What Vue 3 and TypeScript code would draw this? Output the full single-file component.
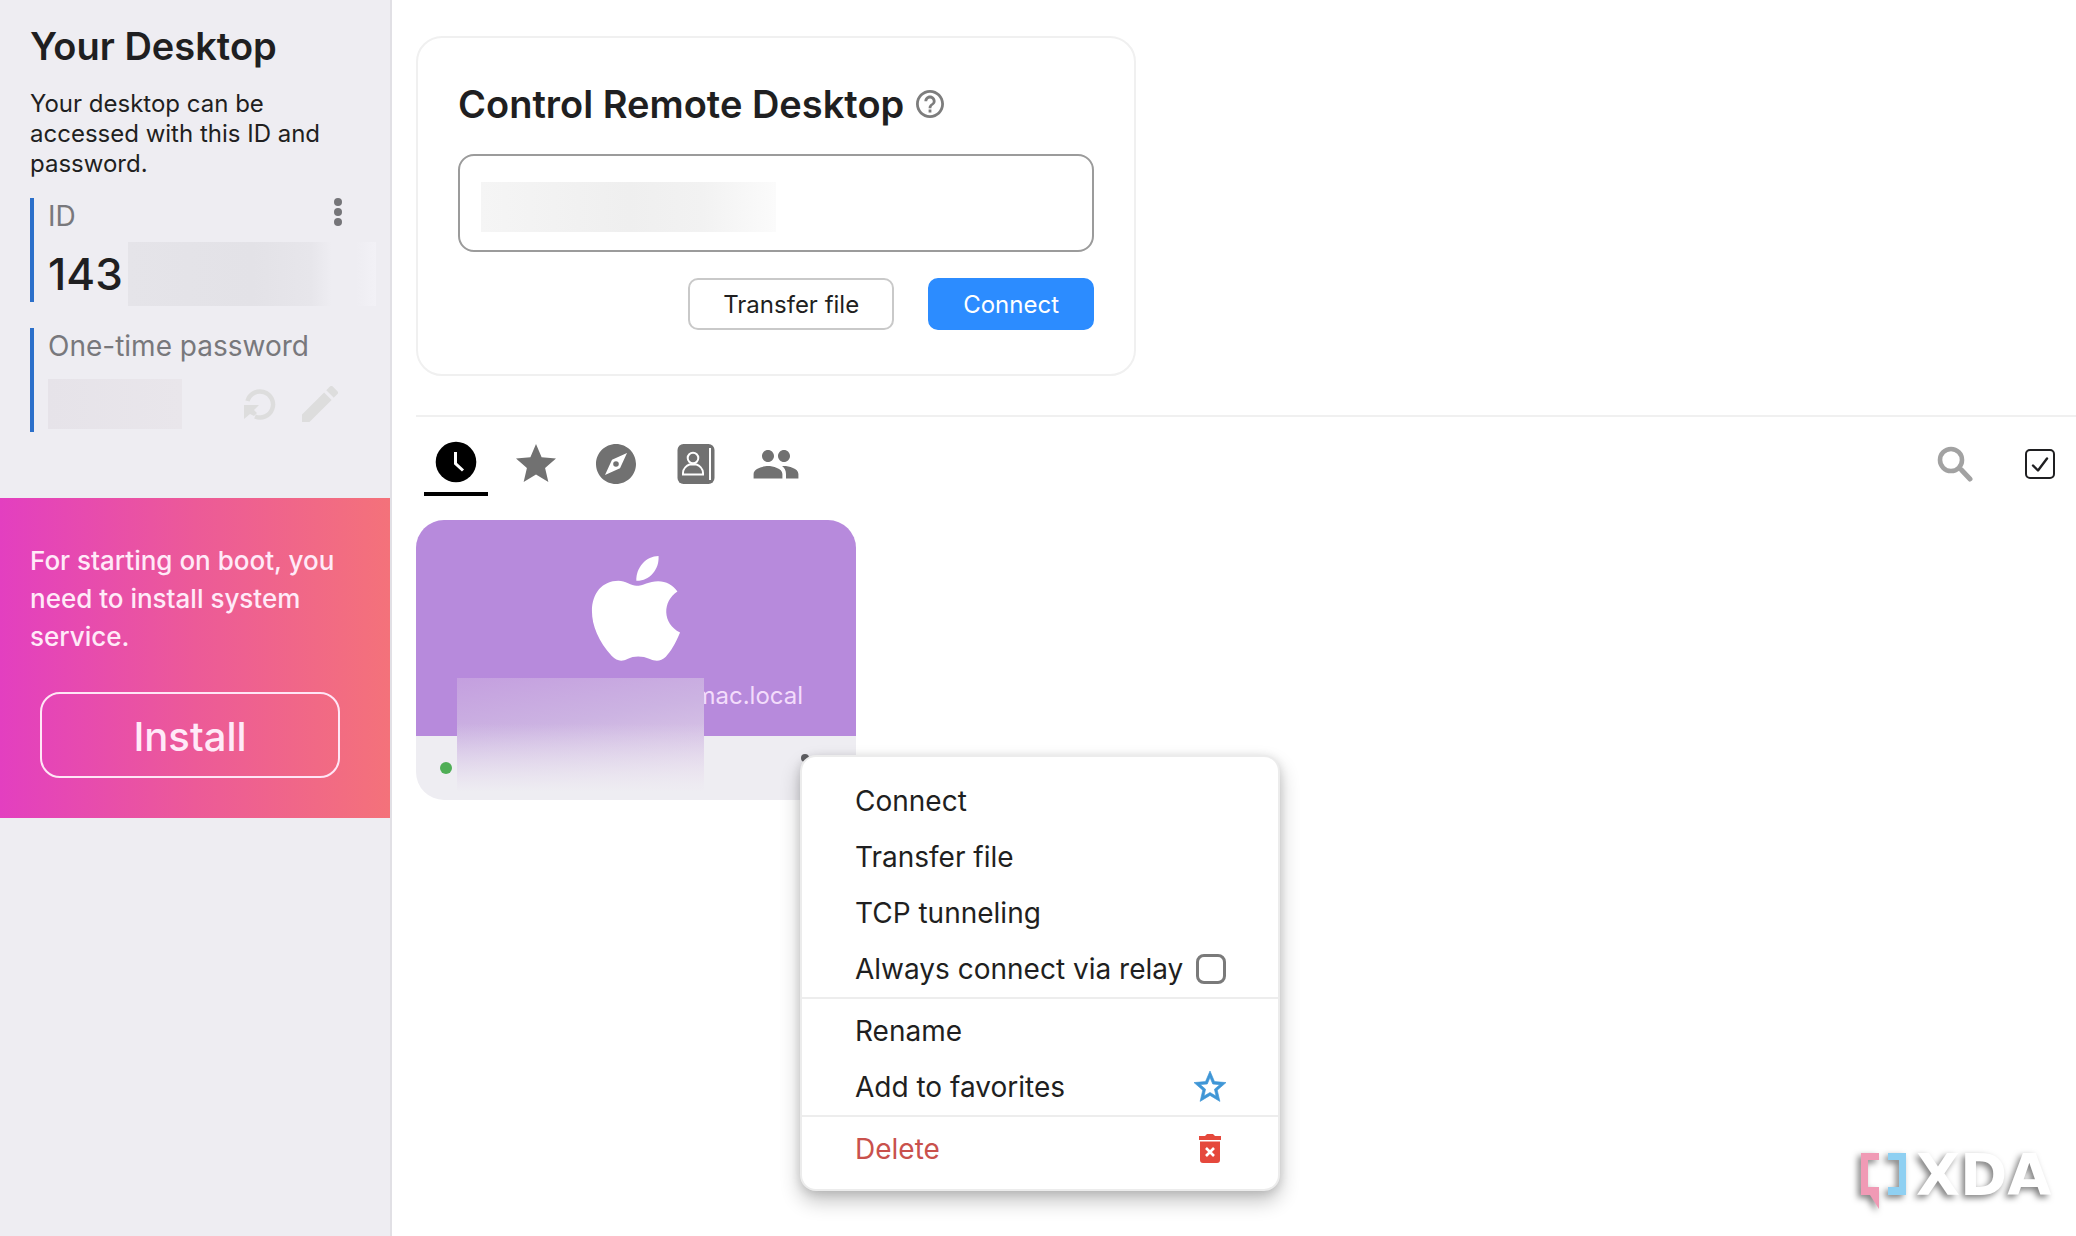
<script setup lang="ts">
import { ref } from 'vue'

interface MenuItem {
  label: string
  icon?: 'check' | 'star' | 'trash'
  danger?: boolean
}

const remoteId = ref('')
const selecting = ref(true)
const viaRelay = ref(false)

const menuGroups: MenuItem[][] = [
  [
    { label: 'Connect' },
    { label: 'Transfer file' },
    { label: 'TCP tunneling' },
    { label: 'Always connect via relay', icon: 'check' },
  ],
  [{ label: 'Rename' }, { label: 'Add to favorites', icon: 'star' }],
  [{ label: 'Delete', icon: 'trash', danger: true }],
]
</script>

<template>
  <div class="app">
    <aside class="sidebar">
      <section class="intro">
        <h1 class="heading">Your Desktop</h1>
        <p class="lead">Your desktop can be accessed with this ID and password.</p>

        <div class="field">
          <div class="field-head">
            <span>ID</span>
            <button class="icon-btn" type="button" aria-label="ID options">
              <svg width="8" height="28" viewBox="0 0 8 28" fill="#757579">
                <circle cx="4" cy="4" r="4" /><circle cx="4" cy="14" r="4" /><circle cx="4" cy="24" r="4" />
              </svg>
            </button>
          </div>
          <div class="field-row">
            <span class="id-value">143</span>
            <span class="redact redact-id"></span>
          </div>
        </div>

        <div class="field">
          <div class="field-head"><span>One-time password</span></div>
          <div class="field-row">
            <span class="redact redact-pw"></span>
            <div class="pw-actions">
              <button class="icon-btn" type="button" aria-label="Refresh password">
                <svg width="32" height="32" viewBox="0 0 32 32">
                  <path d="M3.500 13A13 13 0 1 1 11 28.500" fill="none" stroke="#dddddd" stroke-width="4.500" />
                  <path d="M0 17h15l-5 5 3 3-3 3-4-2-6 5z" fill="#dddddd" />
                </svg>
              </button>
              <button class="icon-btn" type="button" aria-label="Edit password">
                <svg width="36" height="36" viewBox="3 3 18 18" fill="#dddddd">
                  <path d="M3 17.250V21h3.750L17.810 9.940l-3.750-3.750L3 17.250zM20.710 7.040a1 1 0 0 0 0-1.410l-2.340-2.340a1 1 0 0 0-1.410 0l-1.830 1.830 3.750 3.750 1.830-1.830z" />
                </svg>
              </button>
            </div>
          </div>
        </div>
      </section>

      <section class="promo">
        <p class="promo-text">For starting on boot, you need to install system service.</p>
        <button class="install" type="button">Install</button>
      </section>
    </aside>

    <main class="main">
      <section class="card">
        <div class="card-title">
          <label class="heading" for="remote-id">Control Remote Desktop</label>
          <svg width="28" height="28" viewBox="2 2 20 20" fill="#7d7d7d" aria-hidden="true">
            <path d="M11 18h2v-2h-2v2zm1-16C6.480 2 2 6.480 2 12s4.480 10 10 10 10-4.480 10-10S17.520 2 12 2zm0 18c-4.410 0-8-3.590-8-8s3.590-8 8-8 8 3.590 8 8-3.590 8-8 8zm0-14c-2.210 0-4 1.790-4 4h2c0-1.100.9-2 2-2s2 .9 2 2c0 2-3 1.750-3 5h2c0-2.250 3-2.500 3-5 0-2.210-1.790-4-4-4z" />
          </svg>
        </div>
        <div class="id-entry">
          <input id="remote-id" v-model="remoteId" type="text" autocomplete="off" />
          <span class="redact redact-input"></span>
        </div>
        <div class="card-actions">
          <button class="btn" type="button">Transfer file</button>
          <button class="btn btn-primary" type="button">Connect</button>
        </div>
      </section>

      <section class="peers">
        <div class="toolbar">
          <nav class="tabs">
            <button class="tab active" type="button" aria-label="Recent sessions">
              <svg width="48" height="48" viewBox="0 0 48 48">
                <circle cx="24" cy="22" r="20.300" fill="#000" />
                <path d="M23.500 12v11.500l7.500 7" fill="none" stroke="#fff" stroke-width="3" />
              </svg>
            </button>
            <button class="tab" type="button" aria-label="Favorites">
              <svg width="48" height="48" viewBox="0 0 24 24">
                <path d="M12 17.270L18.180 21l-1.640-7.030L22 9.240l-7.190-.61L12 2 9.190 8.630 2 9.240l5.460 4.730L5.820 21z" />
              </svg>
            </button>
            <button class="tab" type="button" aria-label="Discovered">
              <svg width="48" height="48" viewBox="0 0 24 24">
                <path d="M12 10.600a1.400 1.400 0 1 0 0 2.800 1.400 1.400 0 0 0 0-2.800zM12 2C6.480 2 2 6.480 2 12s4.480 10 10 10 10-4.480 10-10S17.520 2 12 2zm2 12.100L6.500 17.500l3.500-7.600 7.500-3.400z" />
              </svg>
            </button>
            <button class="tab" type="button" aria-label="Address book">
              <svg width="48" height="48" viewBox="0 0 48 48">
                <rect x="5.500" y="4" width="37" height="40" rx="6" />
                <g fill="none" stroke="#fff" stroke-width="2">
                  <path d="M38 8v32" />
                  <circle cx="21" cy="18" r="5.300" />
                  <path d="M11 34.500v-1.500c0-4.500 4-7.500 6.500-8.500h7c2.500 1 6.500 4 6.500 8.500v1.500z" />
                </g>
              </svg>
            </button>
            <button class="tab" type="button" aria-label="Groups">
              <svg width="48" height="48" viewBox="0 0 24 24">
                <path d="M16 11c1.660 0 3-1.340 3-3s-1.340-3-3-3-3 1.340-3 3 1.340 3 3 3zm-8 0c1.660 0 3-1.340 3-3S9.660 5 8 5 5 6.340 5 8s1.340 3 3 3zm0 2c-2.330 0-7.200 1.170-7.200 4V19.200h14.400V17c0-2.830-4.870-4-7.200-4zm8 0c-.29 0-.62.020-.97.050 1.160.84 1.970 2.200 1.970 3.950V19.200h6.200V17c0-2.830-4.870-4-7.200-4z" />
              </svg>
            </button>
          </nav>
          <div class="tools">
            <button class="icon-btn" type="button" aria-label="Search">
              <svg width="36" height="36" viewBox="0 0 36 36" fill="none" stroke="#a2a2a2">
                <circle cx="14" cy="14" r="11" stroke-width="4.600" />
                <path d="M24.500 24l8.500 9" stroke-width="5" stroke-linecap="round" />
              </svg>
            </button>
            <label class="select-toggle" aria-label="Select peers">
              <input v-model="selecting" type="checkbox" />
              <svg width="30" height="30" viewBox="0 0 30 30" fill="none" stroke="#1f1f21">
                <rect x="1" y="1" width="28" height="28" rx="4" stroke-width="2" />
                <path v-if="selecting" d="M8 16.500l5 5L22 9.500" stroke-width="2.400" stroke-linecap="round" stroke-linejoin="round" />
              </svg>
            </label>
          </div>
        </div>

        <div class="peer-wrap">
          <article class="peer">
            <div class="peer-top">
              <svg width="90" height="108" viewBox="572 160 270 326" fill="#fff" aria-label="macOS">
                <path d="M708 241c-2-40 30-75 67-75 3 40-27 76-67 75z" />
                <path d="M708 256c20 0 38-14 66-14 24 0 45 12 58 31-46 30-46 96 8 124-14 34-28 57-43 73-15 15-32 14-48 7-24-10-48-10-68 0-16 8-32 7-47-9-40-44-60-92-60-136 0-54 32-91 80-91 20 0 40 15 54 15z" />
              </svg>
              <span class="peer-host">mac.local</span>
            </div>
            <div class="peer-foot">
              <span class="online"></span>
              <button class="icon-btn" type="button" aria-label="Peer options">
                <svg width="8" height="28" viewBox="0 0 8 28" fill="#5f5f63">
                  <circle cx="4" cy="4" r="4" /><circle cx="4" cy="14" r="4" /><circle cx="4" cy="24" r="4" />
                </svg>
              </button>
            </div>
            <span class="redact-peer"></span>
          </article>

          <div class="menu">
            <div v-for="(group, g) in menuGroups" :key="g" class="menu-group">
              <template v-for="item in group" :key="item.label">
                <label v-if="item.icon === 'check'" class="menu-item">
                  <span>{{ item.label }}</span>
                  <input v-model="viaRelay" class="relay" type="checkbox" />
                </label>
                <button v-else class="menu-item" :class="{ danger: item.danger }" type="button">
                  <span>{{ item.label }}</span>
                  <svg v-if="item.icon === 'star'" width="32" height="32" viewBox="2 2 20 20" fill="#3f96d6" stroke="#3f96d6" stroke-width="0.400">
                    <path d="M22 9.240l-7.190-.62L12 2 9.190 8.630 2 9.240l5.460 4.730L5.820 21 12 17.270 18.180 21l-1.630-7.030L22 9.240zM12 15.400l-3.760 2.270 1-4.280-3.320-2.880 4.380-.38L12 6.100l1.710 4.040 4.380.38-3.320 2.880 1 4.280L12 15.400z" />
                  </svg>
                  <svg v-else-if="item.icon === 'trash'" width="32" height="32" viewBox="0 0 32 32">
                    <path d="M5 3h6l2-2h6l2 2h6v4H5zM6 8.500h20V27a3 3 0 0 1-3 3H9a3 3 0 0 1-3-3z" fill="#e5483c" />
                    <path d="M12 15l8 8M20 15l-8 8" stroke="#fff" stroke-width="2.600" />
                  </svg>
                </button>
              </template>
            </div>
          </div>
        </div>
      </section>
    </main>

    <svg class="watermark" width="240" height="100" viewBox="0 0 240 100" aria-label="XDA">
      <path d="M25 23h18v7H32v27h11v22L34 65h-9z" fill="#f09ab5" />
      <path d="M52 23h18v42H52v-8h11V30H52z" fill="#8fd0f2" />
      <text x="80" y="65" class="wordmark">XDA</text>
    </svg>
  </div>
</template>

<style>
body {
  margin: 0;
  background: #fff;
}
</style>

<style scoped>
* {
  box-sizing: border-box;
}

.app {
  display: flex;
  min-height: 100vh;
  font-family: Inter, 'Liberation Sans', sans-serif;
  font-size: 28px;
  color: #1f1f21;
}

button,
input {
  margin: 0;
  font: inherit;
  color: inherit;
}

svg {
  display: block;
}

.icon-btn {
  padding: 0;
  border: 0;
  background: none;
}

.sidebar {
  flex: 0 0 392px;
  background: #eeedf2;
  border-right: 2px solid #e1e0e5;
}

.intro {
  padding: 23px 14px 0 30px;
}

.heading {
  margin: 0;
  font-size: 38px;
  line-height: 46px;
  font-weight: 600;
}

.lead {
  margin: 20px 40px 0 0;
  font-size: 24px;
  line-height: 30px;
}

.field {
  height: 104px;
  margin-top: 26px;
  padding-left: 14px;
  border-left: 4px solid #2b6fca;
}

.lead + .field {
  margin-top: 19px;
}

.field-head {
  display: flex;
  align-items: flex-start;
  justify-content: space-between;
  height: 36px;
  padding-right: 34px;
  line-height: 36px;
  color: #78787c;
}

.field-row {
  display: flex;
  align-items: center;
  height: 58px;
  margin-top: 11px;
}

.id-value {
  width: 80px;
  font-size: 44px;
  font-weight: 500;
}

.redact-id {
  flex: 0 0 248px;
  height: 64px;
  background: linear-gradient(90deg, #e5e4e9 0%, #e3e2e7 50%, #e7e6eb 74%, #eeedf2 82%, #eeedf2 92%, #f2f1f6 100%);
}

.redact-pw {
  width: 134px;
  height: 50px;
  background: linear-gradient(90deg, #e6e3e9, #e9e6eb);
}

.pw-actions {
  display: flex;
  align-items: center;
  gap: 26px;
  margin-left: auto;
  padding-right: 38px;
}

.promo {
  margin-top: 66px;
  padding: 44px 30px 40px;
  background: linear-gradient(90deg, #e33fc0, #ec5a98 50%, #f4727a);
  color: #ffeaf8;
}

.promo-text {
  margin: 0;
  font-size: 26px;
  line-height: 38px;
  font-weight: 500;
}

.install {
  display: block;
  width: 300px;
  height: 86px;
  margin: 36px 10px 0;
  padding: 2px 0 0;
  border: 2px solid #ffe6f6;
  border-radius: 20px;
  background: transparent;
  font-size: 40px;
  font-weight: 500;
}

.main {
  flex: 1;
  min-width: 0;
  padding: 36px 0 0 24px;
}

.card {
  max-width: 720px;
  padding: 43px 40px 44px;
  border: 2px solid #f0f0f0;
  border-radius: 26px;
}

.card-title {
  display: flex;
  align-items: center;
  gap: 12px;
}

.id-entry {
  position: relative;
  margin-top: 27px;
}

.id-entry input {
  display: block;
  width: 100%;
  height: 98px;
  padding: 0 22px;
  border: 2px solid #9b9b9b;
  border-radius: 16px;
  background: #fff;
  outline: none;
}

.redact-input {
  position: absolute;
  top: 28px;
  left: 23px;
  width: 295px;
  height: 50px;
  background: linear-gradient(90deg, #f5f5f5, #efefef 50%, #f2f2f2 75%, #fbfbfb);
}

.card-actions {
  display: flex;
  justify-content: flex-end;
  gap: 34px;
  margin-top: 26px;
}

.btn {
  height: 52px;
  padding: 0 33px;
  border: 2px solid #c9c9c9;
  border-radius: 10px;
  background: #fff;
  font-size: 24px;
}

.btn-primary {
  border-color: #2c8cff;
  background: #2c8cff;
  color: #fff;
}

.peers {
  margin-top: 39px;
  border-top: 2px solid #f0f0f0;
}

.toolbar {
  display: flex;
  align-items: flex-start;
  justify-content: space-between;
  padding: 23px 21px 0 8px;
}

.tabs {
  display: flex;
  gap: 16px;
}

.tab {
  width: 64px;
  height: 56px;
  padding: 0 8px 4px;
  border: 0;
  border-bottom: 4px solid transparent;
  background: none;
  fill: #717171;
}

.tab.active {
  border-bottom-color: #000;
}

.tools {
  display: flex;
  align-items: center;
  gap: 52px;
  height: 48px;
}

.select-toggle {
  position: relative;
  display: block;
}

.select-toggle input {
  position: absolute;
  inset: 0;
  width: 100%;
  height: 100%;
  opacity: 0;
}

.peer-wrap {
  position: relative;
  margin-top: 24px;
}

.peer {
  position: relative;
  width: 440px;
  border-radius: 28px;
  overflow: hidden;
}

.peer-top {
  display: flex;
  flex-direction: column;
  align-items: center;
  height: 216px;
  padding: 34px 53px 0;
  background: #b78adc;
}

.peer-host {
  align-self: flex-end;
  margin-top: 18px;
  font-size: 24px;
  line-height: 32px;
  color: #f3dcfb;
}

.peer-foot {
  display: flex;
  align-items: center;
  justify-content: space-between;
  height: 64px;
  padding: 0 47px 0 24px;
  background: #eeedf2;
}

.online {
  width: 12px;
  height: 12px;
  border-radius: 50%;
  background: #4fae56;
}

.redact-peer {
  position: absolute;
  top: 158px;
  left: 41px;
  width: 247px;
  height: 114px;
  background:
    linear-gradient(180deg, transparent 40%, #eeedf2 100%),
    linear-gradient(170deg, #c49fdf 0%, #ccb3e2 40%, #d8c5e6 70%, #e8d8ec 100%);
}

.menu {
  position: absolute;
  top: 235px;
  left: 384px;
  min-width: 480px;
  padding: 16px 0 12px;
  border: 2px solid #ececec;
  border-radius: 16px;
  background: #fff;
  box-shadow: 0 10px 20px rgba(0, 0, 0, 0.24), 0 2px 10px rgba(0, 0, 0, 0.12);
}

.menu-group + .menu-group {
  padding-top: 4px;
  border-top: 2px solid #ededed;
}

.menu-item {
  display: flex;
  align-items: center;
  justify-content: space-between;
  width: 100%;
  height: 56px;
  padding: 0 52px 0 53px;
  border: 0;
  background: none;
  text-align: left;
}

.relay {
  appearance: none;
  width: 30px;
  height: 30px;
  border: 3px solid #7a7a7a;
  border-radius: 8px;
}

.danger {
  color: #c9514c;
}

.watermark {
  position: fixed;
  right: 0;
  bottom: 6px;
  overflow: visible;
  filter: drop-shadow(-3px 3px 3px rgba(0, 0, 0, 0.5));
}

.wordmark {
  font-family: 'DejaVu Sans', sans-serif;
  font-size: 57px;
  font-weight: 700;
  fill: #fff;
}
</style>
